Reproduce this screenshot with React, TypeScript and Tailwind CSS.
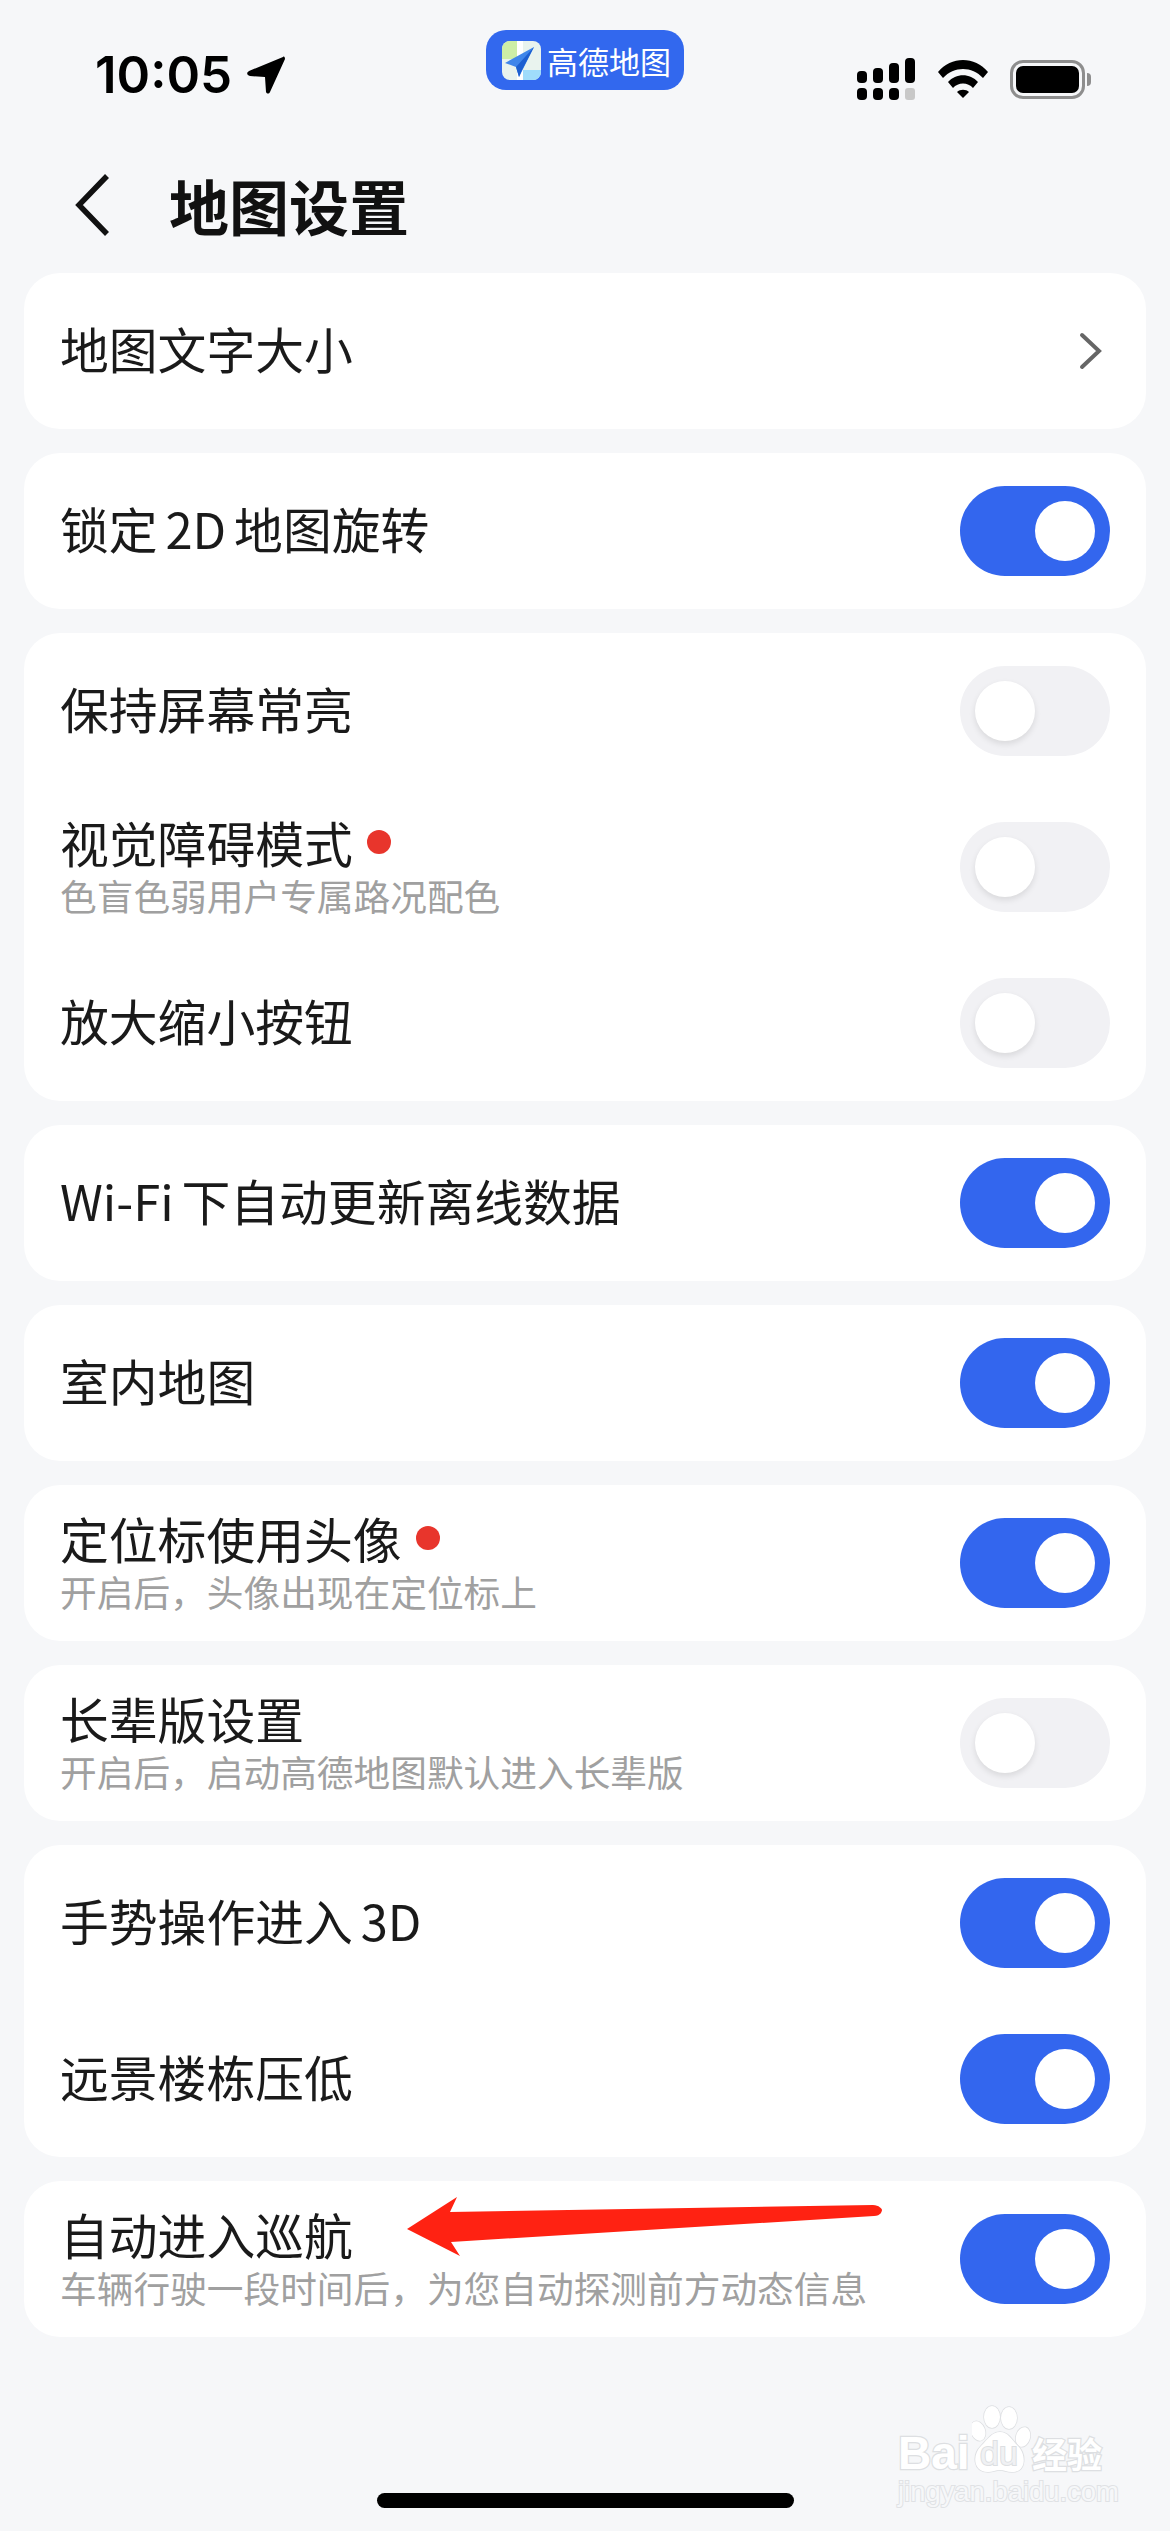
import React from "react";

interface Row {
  title: string;
  sub?: string;
  dot?: boolean;
  on?: boolean;
  link?: boolean;
}

const groups: Row[][] = [
  [{ title: "地图文字大小", link: true }],
  [{ title: "锁定 2D 地图旋转", on: true }],
  [
    { title: "保持屏幕常亮" },
    { title: "视觉障碍模式", sub: "色盲色弱用户专属路况配色", dot: true },
    { title: "放大缩小按钮" },
  ],
  [{ title: "Wi-Fi 下自动更新离线数据", on: true }],
  [{ title: "室内地图", on: true }],
  [{ title: "定位标使用头像", sub: "开启后，头像出现在定位标上", dot: true, on: true }],
  [{ title: "长辈版设置", sub: "开启后，启动高德地图默认进入长辈版" }],
  [
    { title: "手势操作进入 3D", on: true },
    { title: "远景楼栋压低", on: true },
  ],
  [{ title: "自动进入巡航", sub: "车辆行驶一段时间后，为您自动探测前方动态信息", on: true }],
];

function Toggle({ on }: { on?: boolean }) {
  return (
    <div
      className={`flex h-[90px] w-[150px] shrink-0 items-center rounded-full px-[15px] ${
        on ? "justify-end bg-[#3366ee]" : "justify-start bg-[#f1f1f4]"
      }`}
    >
      <div className={`h-[60px] w-[60px] rounded-full bg-white ${on ? "" : "shadow-[0_3px_6px_rgba(0,0,0,0.1)]"}`} />
    </div>
  );
}

function SettingRow({ row }: { row: Row }) {
  return (
    <div className="flex h-[156px] items-center justify-between pl-9 pr-9">
      <div className={`flex flex-col ${row.sub ? "pb-[3px]" : "pb-[6px]"}`}>
        <div className="flex items-center">
          <span className="text-[48.8px] leading-[52px] text-[#1a1a1a] [word-spacing:-3px]">{row.title}</span>
          {row.dot && <span className="ml-[14px] h-6 w-6 rounded-full bg-[#e8352c]" />}
        </div>
        {row.sub && <span className="mt-[7px] text-[36.7px] leading-[40px] text-[#a0a0a0]">{row.sub}</span>}
      </div>
      {row.link ? (
        <svg width="24" height="38" viewBox="0 0 24 38" fill="none" stroke="#666" strokeWidth="4" strokeLinecap="round" className="mr-[7px]">
          <path d="M3 3l17 16L3 35" />
        </svg>
      ) : (
        <Toggle on={row.on} />
      )}
    </div>
  );
}

function StatusIcons() {
  return (
    <div className="flex items-center">
      <svg width="58" height="42" viewBox="0 0 58 42" fill="#000">
        <rect x="0" y="13" width="10" height="12" rx="4" />
        <rect x="16" y="10" width="10" height="15" rx="4" />
        <rect x="32" y="5" width="10" height="20" rx="4" />
        <rect x="48" y="0" width="10" height="25" rx="4" />
        <rect x="0" y="30" width="10" height="12" rx="4" />
        <rect x="16" y="30" width="10" height="12" rx="4" />
        <rect x="32" y="30" width="10" height="12" rx="4" />
        <rect x="48" y="30" width="10" height="12" rx="3" fill="#c8c8c8" />
      </svg>
      <svg width="50" height="38" viewBox="0 0 50 38" className="ml-[23px]">
        <path d="M0 12C13-4 37-4 50 12l-5 6C34 6 16 6 5 18z" />
        <path d="M10 22c8-9 22-9 30 0l-5 6c-5-6-15-6-20 0z" />
        <path d="M19 32c3-3 9-3 12 0l-6 6z" />
      </svg>
      <div className="ml-[22px] flex items-center">
        <div className="h-[39px] w-[75px] rounded-[13px] border-[3px] border-[#8e8e8e] p-[3px]">
          <div className="h-full w-full rounded-[7px] bg-black" />
        </div>
        <div className="ml-[2px] h-[13px] w-[4px] rounded-r-full bg-[#8e8e8e]" />
      </div>
    </div>
  );
}

function AmapBadge() {
  return (
    <div className="absolute left-[486px] top-[30px] flex h-[60px] w-[198px] items-center rounded-[20px] bg-[#3268ee] pl-4">
      <svg width="39" height="39" viewBox="0 0 39 39" className="shrink-0">
        <rect width="39" height="39" rx="8" fill="#e9f3ee" />
        <path d="M0 8a8 8 0 018-8h7v18H0z" fill="#cdeea6" />
        <path d="M15 0h6v39h-6z" fill="#ffffff" />
        <path d="M21 29h18v2a8 8 0 01-8 8H21z" fill="#9fdcfb" />
        <path d="M32 6L3 22l11 4 3 10z" fill="#3f86ea" />
        <path d="M32 6L14 26l3 10 3-7z" fill="#1d5fd0" />
      </svg>
      <span className="ml-[6px] whitespace-nowrap text-[31px] leading-none text-white">高德地图</span>
    </div>
  );
}

function RedArrow() {
  return (
    <svg width="490" height="70" viewBox="0 0 490 70" className="absolute left-[400px] top-[2192px]">
      <path d="M7 37L57 5l-7 15 423-7c6 0 9 4 9 5s-1 6-8 6L51 50l9 14z" fill="#ff2212" />
    </svg>
  );
}

function Watermark() {
  return (
    <div className="absolute left-[898px] top-[2405px] w-[210px] text-white [font-family:'Liberation_Sans',sans-serif] [paint-order:stroke_fill]">
      <svg width="60" height="70" viewBox="0 0 60 70" fill="#fff" stroke="#dddfe2" strokeWidth="1.5" className="absolute left-[74px] top-0">
        <ellipse cx="6" cy="26" rx="7" ry="10" transform="rotate(-20 6 26)" />
        <ellipse cx="20" cy="12" rx="8" ry="11" />
        <ellipse cx="37" cy="13" rx="8" ry="11" />
        <ellipse cx="51" cy="32" rx="7" ry="10" transform="rotate(15 51 32)" />
        <path d="M28 27c8 0 11 7 18 14 8 8 9 26-6 26-5 0-8-2-12-2s-8 2-12 2C1 67 0 50 9 41c7-7 11-14 19-14z" />
      </svg>
      <div className="relative mt-[28px] flex h-[40px] items-center whitespace-nowrap">
        <span className="w-[72px] text-[46px] font-bold leading-[40px] [-webkit-text-stroke:2.5px_#dddfe2]">Bai</span>
        <span className="w-[62px] pl-[10px] text-[34px] leading-[40px] text-[#f0f1f3] [-webkit-text-stroke:2px_#dddfe2]">du</span>
        <span className="text-[35px] font-bold leading-[40px] [font-family:'Noto_Sans_CJK_SC',sans-serif] [-webkit-text-stroke:2.5px_#dddfe2]">经验</span>
      </div>
      <div className="mt-[4px] whitespace-nowrap text-[27.4px] leading-[30px] text-[#f6f7f9] [-webkit-text-stroke:2px_#e0e2e5]">jingyan.baidu.com</div>
    </div>
  );
}

export default function App() {
  return (
    <div className="relative flex h-[2531px] w-[1170px] flex-col overflow-hidden bg-[#f6f7f9] [font-family:'Noto_Sans_CJK_SC','Liberation_Sans',sans-serif]">
      <div className="flex h-[136px] items-end justify-between pb-[36px] pl-[95px] pr-[79px]">
        <div className="flex items-center">
          <span className="text-[51px] font-semibold leading-[50px] text-black [font-family:Inter,sans-serif]">10:05</span>
          <svg width="40" height="38" viewBox="0 0 40 38" className="ml-[14px]">
            <path d="M37 1L3 15c-3 2-2 4 1 5l15 1 1 15c1 2 3 2 4 0L39 3c0-2-1-3-2-2z" />
          </svg>
        </div>
        <StatusIcons />
      </div>
      <AmapBadge />

      <div className="flex h-[137px] items-center pl-[74px]">
        <svg width="36" height="64" viewBox="0 0 36 64" fill="none" stroke="#111" strokeWidth="5.5">
          <path d="M33 3L5 32l28 29" />
        </svg>
        <h1 className="ml-[59px] text-[60px] font-bold leading-none text-[#111]">地图设置</h1>
      </div>

      <div className="flex flex-col gap-6 px-6">
        {groups.map((rows, i) => (
          <div key={i} className="overflow-hidden rounded-[36px] bg-white">
            {rows.map((row) => (
              <SettingRow key={row.title} row={row} />
            ))}
          </div>
        ))}
      </div>

      <div className="mt-auto mb-[23px] h-[15px] w-[417px] self-center rounded-full bg-black" />

      <RedArrow />
      <Watermark />
    </div>
  );
}
